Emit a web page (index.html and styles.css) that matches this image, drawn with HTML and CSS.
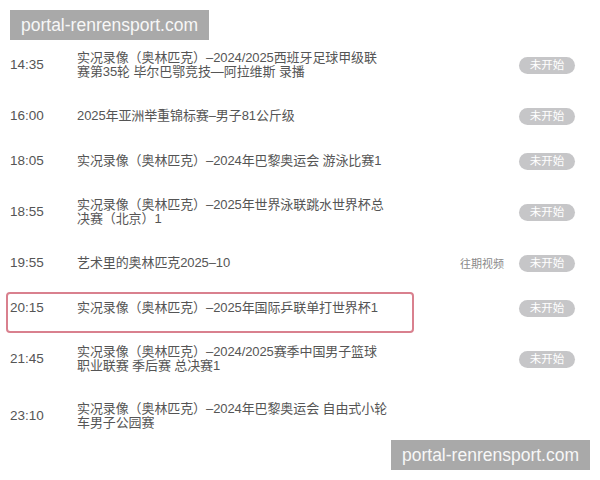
FILE: index.html
```html
<!DOCTYPE html>
<html lang="zh-CN">
<head>
<meta charset="utf-8">
<link rel="stylesheet" href="styles.css">
</head>
<body>
<div class="list">
  <div class="row two">
    <div class="time">14:35</div>
    <div class="title">实况录像（奥林匹克）–2024/2025西班牙足球甲级联<br>赛第35轮 毕尔巴鄂竞技—阿拉维斯 录播</div>
    <div class="side"><span class="badge">未开始</span></div>
  </div>
  <div class="row">
    <div class="time">16:00</div>
    <div class="title">2025年亚洲举重锦标赛–男子81公斤级</div>
    <div class="side"><span class="badge">未开始</span></div>
  </div>
  <div class="row">
    <div class="time">18:05</div>
    <div class="title">实况录像（奥林匹克）–2024年巴黎奥运会 游泳比赛1</div>
    <div class="side"><span class="badge">未开始</span></div>
  </div>
  <div class="row two">
    <div class="time">18:55</div>
    <div class="title">实况录像（奥林匹克）–2025年世界泳联跳水世界杯总<br>决赛（北京）1</div>
    <div class="side"><span class="badge">未开始</span></div>
  </div>
  <div class="row">
    <div class="time">19:55</div>
    <div class="title">艺术里的奥林匹克2025–10</div>
    <div class="side"><span class="past">往期视频</span><span class="badge">未开始</span></div>
  </div>
  <div class="row row-marked">
    <div class="time">20:15</div>
    <div class="title">实况录像（奥林匹克）–2025年国际乒联单打世界杯1</div>
    <div class="side"><span class="badge">未开始</span></div>
  </div>
  <div class="row two">
    <div class="time">21:45</div>
    <div class="title">实况录像（奥林匹克）–2024/2025赛季中国男子篮球<br>职业联赛 季后赛 总决赛1</div>
    <div class="side"><span class="badge">未开始</span></div>
  </div>
  <div class="row two">
    <div class="time">23:10</div>
    <div class="title">实况录像（奥林匹克）–2024年巴黎奥运会 自由式小轮<br>车男子公园赛</div>
    <div class="side"></div>
  </div>
</div>
<div class="watermark watermark-top">portal-renrensport.com</div>
<div class="watermark watermark-bottom">portal-renrensport.com</div>
</body>
</html>
```
FILE: styles.css
```css
html, body {
  margin: 0;
  padding: 0;
  background: #ffffff;
}
body {
  width: 600px;
  height: 480px;
  overflow: hidden;
  position: relative;
  font-family: "Liberation Sans", "Noto Sans CJK SC", sans-serif;
  color: #4d4d4d;
}
.list {
  padding-top: 36.5px;
  display: flex;
  flex-direction: column;
}
.row {
  position: relative;
  display: flex;
  align-items: center;
  height: 45px;
  padding-left: 10px;
  box-sizing: border-box;
}
.row.two {
  height: 57px;
}
.time {
  width: 67px;
  flex: none;
  font-size: 13.5px;
  line-height: 16px;
  color: #555555;
}
.title {
  width: 310px;
  flex: none;
  font-size: 13px;
  line-height: 14px;
  color: #555555;
  white-space: nowrap;
  letter-spacing: -0.1px;
}
.side {
  margin-left: auto;
  margin-right: 25px;
  display: flex;
  align-items: center;
}
.past {
  font-size: 11px;
  color: #8a8a8a;
  margin-right: 15px;
}
.badge {
  display: inline-block;
  width: 56px;
  height: 17px;
  line-height: 17px;
  border-radius: 9px;
  background: #c6c6c8;
  color: #ffffff;
  font-size: 11.5px;
  text-align: center;
}
.row-marked::before {
  content: "";
  position: absolute;
  left: 6px;
  top: 6.5px;
  width: 404px;
  height: 37px;
  border: 2px solid #d9808e;
  border-radius: 4px;
}
.watermark {
  position: absolute;
  width: 199px;
  height: 30px;
  background: #a9a9a9;
  color: #f7f7f7;
  font-size: 17.5px;
  line-height: 30px;
  text-align: center;
  font-family: "Liberation Sans", sans-serif;
}
.watermark-top {
  left: 10px;
  top: 10px;
}
.watermark-bottom {
  left: 391px;
  top: 440px;
}
```
